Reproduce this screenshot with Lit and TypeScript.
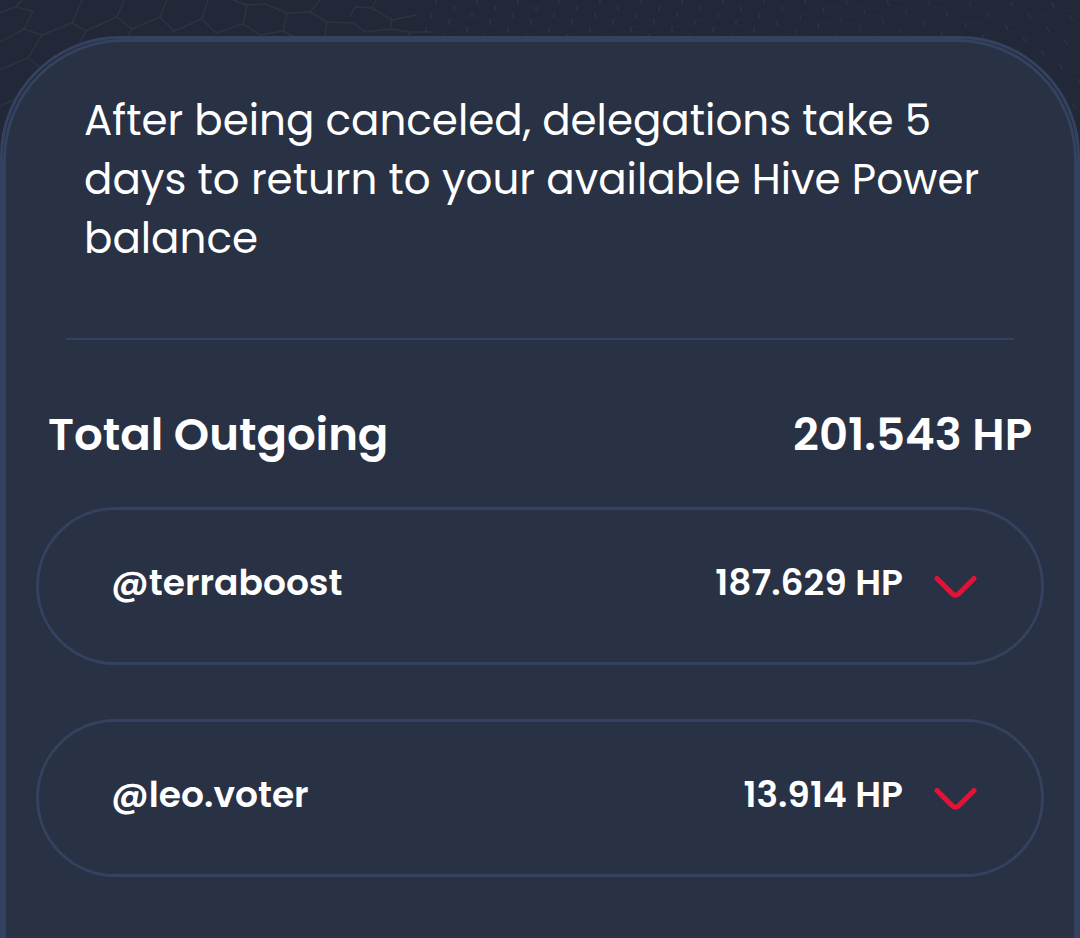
import { LitElement, html, css, svg } from "lit";
import { customElement, property, state } from "lit/decorators.js";

interface Delegation {
  account: string;
  amount: string;
}

const OUTGOING: Delegation[] = [
  { account: "@terraboost", amount: "187.629 HP" },
  { account: "@leo.voter", amount: "13.914 HP" },
];

// Honeycomb mesh: large cells on the left, flattening towards the right.
const LARGE_CELLS =
  "M22 0L15 7L0 13M15 7L33 11L24 29L0 42M24 29L42 35L28 58L0 70M28 58L40 67" +
  "M0 106L14 100M42 35L72 23L82 0M72 23L86 31L80 42M86 31L117 17L124 0" +
  "M117 17L132 29L128 37M132 29L160 17L167 0M160 17L174 31L202 19L208 0" +
  "M202 19L216 33L243 24L247 5L233 0M247 5L265 4L287 13L283 31L260 35L243 24" +
  "M287 13L310 12L320 0M310 12L327 22L325 36M327 22L353 23M283 31L296 38" +
  "M350 17L355 7L372 8L392 20L390 29L366 32L353 23M372 8L376 0M392 20L416 15" +
  "M390 29L410 32L433 32M410 32L408 38";

function cells(): { walls: string; edges: string } {
  let walls = "";
  let edges = "";
  for (let row = -8; row < 13; row++) {
    for (let col = 0; col < 20; col++) {
      const x = 372 + col * 41 + row * 18 - (row > 0 ? Math.floor(row / 2) * 41 : 0);
      const right = Math.max(0, x - 760);
      const y = 6 + row * (7 + right * 0.018) + right * 0.03;
      if (x < 415 || x > 1080 || y < -4 || y > 125) continue;
      const lean = right * 0.012;
      walls += `M${x} ${y}l${lean} 5`;
      edges += `M${x} ${y}l20 ${lean - 2}M${x + lean} ${y + 5}l20 ${2 + lean}`;
    }
  }
  return { walls, edges };
}

const FLAT_CELLS = cells();

@customElement("delegation-row")
export class DelegationRow extends LitElement {
  @property() account = "";
  @property() amount = "";
  @state() private open = false;

  static styles = css`
    :host {
      display: block;
    }
    .row {
      display: flex;
      align-items: center;
      box-sizing: border-box;
      padding: 48px 63px 54px 72px;
      border: 3px solid #35425f;
      border-radius: 79px;
      font-size: 36px;
      line-height: 50px;
      font-weight: 600;
    }
    .account {
      flex: 1;
    }
    .toggle {
      display: flex;
      margin-left: 31px;
      padding: 0;
      border: 0;
      background: none;
      color: #e31337;
      cursor: pointer;
    }
    .chevron {
      width: 44px;
      height: 44px;
    }
    .open {
      transform: rotate(180deg);
    }
  `;

  render() {
    return html`
      <div class="row">
        <span class="account">${this.account}</span>
        <span>${this.amount}</span>
        <button
          class="toggle"
          aria-label="Details for ${this.account}"
          aria-expanded=${this.open}
          @click=${() => (this.open = !this.open)}
        >
          <svg class="chevron ${this.open ? "open" : ""}" viewBox="0 0 44 44" fill="none"
            stroke="currentColor" stroke-width="5" stroke-linecap="round">
            <path d="M3 17.5L18 32.5Q21.5 36 25 32.5L40 17.5" />
          </svg>
        </button>
      </div>
    `;
  }
}

@customElement("app-root")
export class AppRoot extends LitElement {
  static styles = css`
    :host {
      display: flex;
      position: relative;
      box-sizing: border-box;
      min-height: 100vh;
      padding-top: 36px;
      overflow: hidden;
      background: #222838;
      color: #ffffff;
      font-family: Poppins, Inter, sans-serif;
    }
    .mesh {
      position: absolute;
      top: 0;
      left: 0;
      width: 100%;
      height: 160px;
      stroke: #2c3341;
    }
    .frame {
      position: relative;
      display: flex;
      flex: 1;
      min-width: 0;
      border: 3px solid #35425f;
      border-bottom: 0;
      border-radius: 120px 120px 0 0;
    }
    .panel {
      flex: 1;
      min-width: 0;
      padding: 0 30px;
      border: 3px solid #35425f;
      border-bottom: 0;
      border-radius: 120px 120px 0 0;
      background: #293144;
    }
    .notice {
      margin: 0 30px;
      padding: 49px 18px 70px;
      border-bottom: 2px solid #35425f;
      font-size: 42px;
      line-height: 59px;
    }
    .total {
      display: flex;
      justify-content: space-between;
      margin: 0;
      padding: 65px 12px 42px;
      font-size: 45px;
      line-height: 60px;
      font-weight: 600;
    }
    .list {
      display: grid;
      gap: 54px;
      margin: 0;
      padding: 0;
      list-style: none;
    }
  `;

  render() {
    return html`
      <svg class="mesh" viewBox="0 0 1080 160" preserveAspectRatio="xMidYMin slice" fill="none" aria-hidden="true">
        ${svg`
          <path d=${LARGE_CELLS} stroke-width="1.5" />
          <path d=${FLAT_CELLS.walls} stroke-width="1.5" />
          <path d=${FLAT_CELLS.edges} stroke-width="1" stroke-opacity="0.4" />
        `}
      </svg>
      <main class="frame">
        <section class="panel">
          <p class="notice">
            After being canceled, delegations take 5 days to return to your available Hive Power balance
          </p>
          <h2 class="total"><span>Total Outgoing</span><span>201.543 HP</span></h2>
          <ul class="list">
            ${OUTGOING.map(
              (d) => html`<li><delegation-row .account=${d.account} .amount=${d.amount}></delegation-row></li>`,
            )}
          </ul>
        </section>
      </main>
    `;
  }
}
